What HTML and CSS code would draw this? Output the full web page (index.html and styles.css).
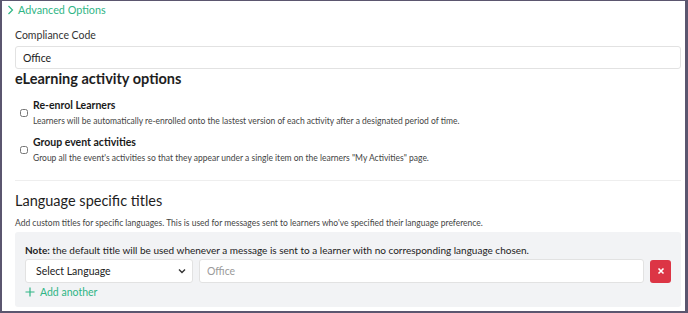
FILE: index.html
```html
<!DOCTYPE html>
<html lang="en">
<head>
  <meta charset="UTF-8" />
  <title>Advanced Options</title>
  <link rel="stylesheet" href="styles.css">
</head>
<body>
  <div class="frame">
    <div class="toggle">
      <svg class="chevron" width="7" height="10" viewBox="0 0 7 10"><path d="M1.5 1 L5.5 5 L1.5 9" fill="none" stroke="currentColor" stroke-width="1.2"/></svg>
      Advanced Options
    </div>

    <label class="field-label">Compliance Code</label>
    <input class="text-input" type="text" value="Office" />

    <h2 class="heading">eLearning activity options</h2>

    <div class="option">
      <input type="checkbox" class="check" />
      <div>
        <div class="option-title">Re-enrol Learners</div>
        <div class="option-desc">Learners will be automatically re-enrolled onto the lastest version of each activity after a designated period of time.</div>
      </div>
    </div>

    <div class="option">
      <input type="checkbox" class="check" />
      <div>
        <div class="option-title">Group event activities</div>
        <div class="option-desc">Group all the event's activities so that they appear under a single item on the learners "My Activities" page.</div>
      </div>
    </div>

    <hr class="divider" />

    <h2 class="heading light">Language specific titles</h2>
    <div class="section-desc">Add custom titles for specific languages. This is used for messages sent to learners who've specified their language preference.</div>

    <div class="panel">
      <div class="note"><strong>Note:</strong> the default title will be used whenever a message is sent to a learner with no corresponding language chosen.</div>
      <div class="lang-row">
        <div class="select">
          <span>Select Language</span>
          <svg width="8" height="6" viewBox="0 0 8 6"><path d="M1 1.5 L4 4.5 L7 1.5" fill="none" stroke="#333" stroke-width="1.4"/></svg>
        </div>
        <input class="text-input title-input" type="text" placeholder="Office" />
        <button class="remove-btn">
          <svg width="8" height="8" viewBox="0 0 8 8"><path d="M1.5 1.5 L6.5 6.5 M6.5 1.5 L1.5 6.5" stroke="#fff" stroke-width="1.6"/></svg>
        </button>
      </div>
      <div class="add-another">
        <svg width="10" height="10" viewBox="0 0 10 10"><path d="M5 0.5 V9.5 M0.5 5 H9.5" stroke="currentColor" stroke-width="1.2"/></svg>
        Add another
      </div>
    </div>
  </div>
</body>
</html>
```

FILE: styles.css
```css
* {
  box-sizing: border-box;
}

body {
  margin: 0;
  font-family: Lato, 'Noto Sans', sans-serif;
  color: #222;
  background: #fff;
}

.frame {
  width: 688px;
  height: 313px;
  border-style: solid;
  border-color: #5b566f;
  border-width: 1px 3px 2px 2px;
  padding: 0 4px 0 13px;
  overflow: hidden;
}

.toggle {
  display: flex;
  align-items: center;
  gap: 4px;
  margin-left: -8px;
  height: 17px;
  font-size: 10.8px;
  color: #2fb585;
}

.field-label {
  display: block;
  margin-top: 11px;
  font-size: 10.5px;
  color: #333;
}

.text-input {
  display: block;
  width: 100%;
  height: 23px;
  margin-top: 5px;
  padding: 0 7px;
  border: 1px solid #e2e2e2;
  border-radius: 3px;
  font-family: inherit;
  font-size: 10.5px;
  color: #222;
  background: #fff;
}

.heading {
  margin: 1px 0 0;
  font-size: 14.5px;
  font-weight: 700;
  line-height: 18px;
  color: #1e1e1e;
}

.heading.light {
  font-weight: 400;
  margin-top: 11px;
}

.option {
  display: flex;
  align-items: center;
  gap: 5px;
  margin-top: 11px;
  margin-left: 5px;
}

.option + .option {
  margin-top: 10px;
}

.check {
  width: 8px;
  height: 8px;
  margin: 0;
}

.option-title {
  font-size: 10.5px;
  font-weight: 700;
  color: #1a1a1a;
}

.option-desc {
  margin-top: 5px;
  font-size: 8.5px;
  color: #444;
}

.divider {
  margin: 17px 0 0;
  border: none;
  border-top: 1px solid #eeeeee;
}

.section-desc {
  margin-top: 8px;
  font-size: 8.5px;
  color: #444;
}

.panel {
  margin-top: 4px;
  padding: 12px 10px 6px;
  background: #f2f3f5;
  border-radius: 3px;
  height: 75px;
}

.note {
  font-size: 10px;
  color: #222;
}

.lang-row {
  display: flex;
  align-items: center;
  gap: 6px;
  margin-top: 3px;
}

.select {
  display: flex;
  align-items: center;
  justify-content: space-between;
  width: 168px;
  height: 24px;
  padding: 0 6px 0 10px;
  background: #fff;
  border: 1px solid #e2e2e2;
  border-radius: 3px;
  font-size: 10.5px;
  color: #222;
}

.title-input {
  flex: 1;
  width: auto;
  height: 24px;
  margin-top: 0;
  color: #999;
}

.title-input::placeholder {
  color: #9a9a9a;
}

.remove-btn {
  display: flex;
  align-items: center;
  justify-content: center;
  width: 21px;
  height: 23px;
  padding: 0;
  border: none;
  border-radius: 3px;
  background: #dc3545;
}

.add-another {
  display: flex;
  align-items: center;
  gap: 5px;
  margin-top: 3px;
  font-size: 10.5px;
  color: #2fb585;
}
```
